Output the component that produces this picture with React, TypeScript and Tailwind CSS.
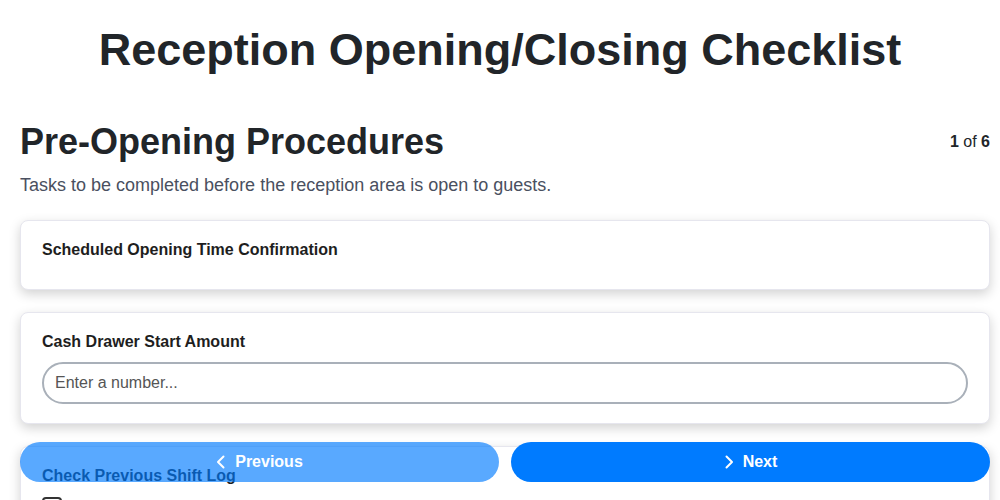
// 체크리스트 한 단계: 제목, 설명, 항목 카드들 + 하단 고정 네비게이션
const font = { fontFamily: '"Liberation Sans", Arial, sans-serif' }

function Chevron({ dir }: { dir: 'left' | 'right' }) {
  return (
    <svg width="10" height="16" viewBox="0 0 10 16" fill="none" stroke="currentColor" strokeWidth="2" strokeLinecap="round" strokeLinejoin="round">
      <polyline points={dir === 'right' ? '2.5,2.5 8,8 2.5,13.5' : '7.5,2.5 2,8 7.5,13.5'} />
    </svg>
  )
}

function TaskCard({ label, children }: { label: string; children?: React.ReactNode }) {
  return (
    <div className="rounded-lg border border-[#e6e6ee] bg-white px-[21px] pt-[19px] pb-[18px] shadow-[0_4px_12px_rgba(0,0,0,0.18)]">
      <div className="mb-[11px] text-base font-bold leading-[20px] text-[#1e1e1e]">{label}</div>
      {children}
    </div>
  )
}

export default function App() {
  return (
    <div className="min-h-screen bg-white pl-5 pr-[10px] pb-24 text-[#212529]" style={font}>
      <h1 className="-ml-[10px] pt-[24px] pb-[46px] text-center text-[45px] font-bold leading-[52px] text-[#212529]">
        Reception Opening/Closing Checklist
      </h1>

      <div className="flex items-center justify-between">
        <h2 className="text-[36px] font-bold leading-[40px] text-[#212529]">Pre-Opening Procedures</h2>
        <div className="text-base text-[#212529]">
          <span className="font-bold">1</span> of <span className="font-bold">6</span>
        </div>
      </div>
      <p className="mt-[11px] text-lg leading-[24px] text-[#4a5060]">
        Tasks to be completed before the reception area is open to guests.
      </p>

      <div className="mt-[23px] flex flex-col gap-[22px]">
        <TaskCard label="Scheduled Opening Time Confirmation" />
        <TaskCard label="Cash Drawer Start Amount">
          <input
            type="number"
            placeholder="Enter a number..."
            className="-mt-px mb-px h-[42px] w-full rounded-full border-2 border-[#a9b0b9] px-[11px] text-base text-[#333] placeholder:text-[#555]"
            style={font}
          />
        </TaskCard>
        <TaskCard label="Check Previous Shift Log">
          <label className="-mt-0.5 flex items-center gap-1.5 text-base text-[#222]">
            <span className="h-5 w-5 rounded border-2 border-[#333]" />
            Complete
          </label>
        </TaskCard>
      </div>

      {/* 하단 고정 버튼 */}
      <div className="fixed bottom-[18px] left-5 right-[10px] flex gap-3">
        <button className="flex h-10 flex-1 items-center justify-center gap-[9px] rounded-full bg-[#007bff] text-base font-bold text-white opacity-65">
          <Chevron dir="left" />
          Previous
        </button>
        <button className="flex h-10 flex-1 items-center justify-center gap-[9px] rounded-full bg-[#007bff] text-base font-bold text-white">
          <Chevron dir="right" />
          Next
        </button>
      </div>
    </div>
  )
}
